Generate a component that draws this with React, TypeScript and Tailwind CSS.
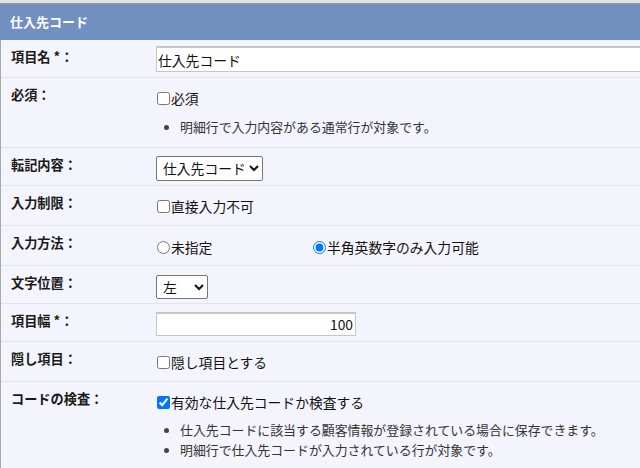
import type { ReactNode } from 'react'

function Row({ label, className, children }: { label: string; className: string; children: ReactNode }) {
  return (
    <div className={`flex border-b border-[#e4e4ec] ${className}`}>
      <div className="w-[155px] shrink-0 pl-[10px] pt-[9px] text-[13.2px] leading-[16px] font-bold text-[#1a1a1a]">{label}</div>
      <div className="flex-1 min-w-0">{children}</div>
    </div>
  )
}

function Check({ label, checked }: { label: string; checked?: boolean }) {
  return (
    <label className="flex items-center h-[16px] text-[13.8px] text-[#111]">
      <input type="checkbox" defaultChecked={checked} className="m-0 ml-[1px] mr-[1px] w-[13px] h-[13px]" />
      {label}
    </label>
  )
}

function Note({ children }: { children: ReactNode }) {
  return (
    <li className="flex items-center h-[20px] text-[12.9px] text-[#333]">
      <span className="ml-[8px] mr-[11px] w-[5px] h-[5px] rounded-full bg-[#444]" />
      {children}
    </li>
  )
}

export default function App() {
  return (
    <div className="w-[640px] h-[468px] overflow-hidden bg-[#f4f4fc] font-['Noto_Sans_CJK_JP','Noto_Sans',sans-serif]">
      <div className="h-[4px] bg-[#e2e2e2] border-b border-[#999]" />
      <div className="h-[36px] bg-[#7190bf] pl-[10px] flex items-center text-[13px] font-bold text-white">仕入先コード</div>
      <div className="border-l border-[#a8a8a8]">
        <Row label="項目名 *：" className="h-[38px]">
          <div className="pt-[6px]">
            <input
              type="text"
              defaultValue="仕入先コード"
              className="w-[520px] h-[26px] bg-white border border-[#c6c6c6] border-t-2 px-[1px] text-[13.8px] text-[#111] outline-none"
            />
          </div>
        </Row>
        <Row label="必須：" className="h-[70px]">
          <div className="pt-[12px]">
            <Check label="必須" />
            <ul className="mt-[11px]">
              <Note>明細行で入力内容がある通常行が対象です。</Note>
            </ul>
          </div>
        </Row>
        <Row label="転記内容：" className="h-[38px]">
          <div className="pt-[7px]">
            <select defaultValue="code" className="h-[25px] bg-white border border-[#767676] rounded-[2px] pl-[2px] text-[13.8px] text-[#111]">
              <option value="code">仕入先コード</option>
              <option value="name">仕入先名</option>
            </select>
          </div>
        </Row>
        <Row label="入力制限：" className="h-[40px]">
          <div className="pt-[12px]">
            <Check label="直接入力不可" />
          </div>
        </Row>
        <Row label="入力方法：" className="h-[40px]">
          <div className="pt-[13px] flex">
            <label className="w-[156px] flex items-center h-[16px] text-[13.8px] text-[#111]">
              <input type="radio" name="method" className="m-0 ml-[1px] mr-[1px] w-[13px] h-[13px]" />
              未指定
            </label>
            <label className="flex items-center h-[16px] text-[13.8px] text-[#111]">
              <input type="radio" name="method" defaultChecked className="m-0 ml-[1px] mr-[1px] w-[13px] h-[13px]" />
              半角英数字のみ入力可能
            </label>
          </div>
        </Row>
        <Row label="文字位置：" className="h-[38px]">
          <div className="pt-[8px]">
            <select defaultValue="left" className="h-[24px] bg-white border border-[#767676] rounded-[2px] pl-[2px] text-[13.8px] text-[#111]">
              <option value="left">左</option>
              <option value="center">中央</option>
              <option value="right">右</option>
            </select>
          </div>
        </Row>
        <Row label="項目幅 *：" className="h-[38px]">
          <div className="pt-[7px]">
            <input
              type="text"
              defaultValue="100"
              className="w-[200px] h-[24px] bg-white border border-[#c6c6c6] border-t-2 px-[2px] text-right text-[13.8px] text-[#111] outline-none"
            />
          </div>
        </Row>
        <Row label="隠し項目：" className="h-[40px]">
          <div className="pt-[12px]">
            <Check label="隠し項目とする" />
          </div>
        </Row>
        <Row label="コードの検査：" className="h-[90px]">
          <div className="pt-[12px]">
            <Check label="有効な仕入先コードか検査する" checked />
            <ul className="mt-[10px]">
              <Note>仕入先コードに該当する顧客情報が登録されている場合に保存できます。</Note>
              <Note>明細行で仕入先コードが入力されている行が対象です。</Note>
            </ul>
          </div>
        </Row>
      </div>
    </div>
  )
}
